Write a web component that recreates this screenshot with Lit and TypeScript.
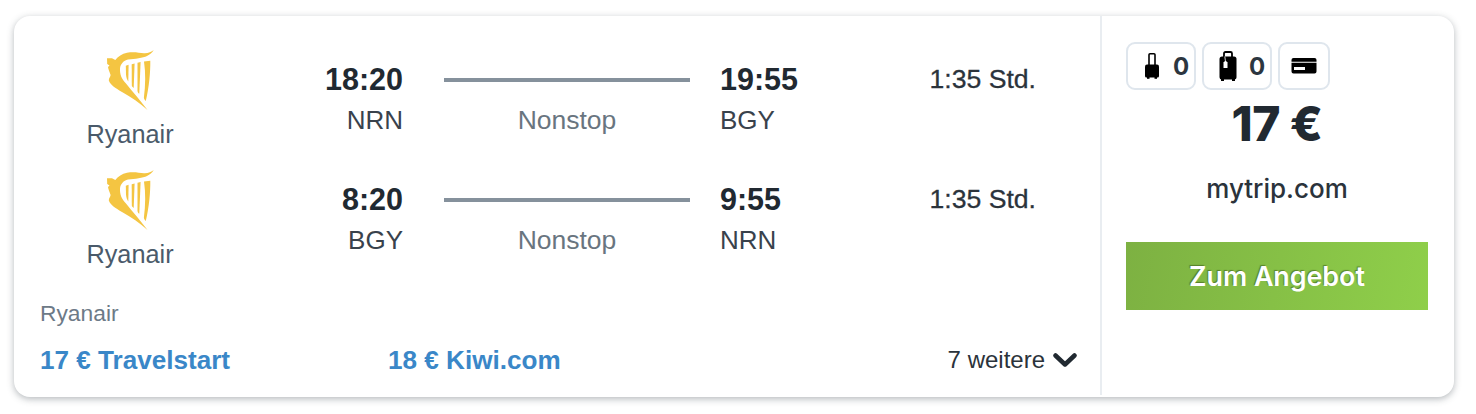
import { LitElement, html, css, svg } from "lit";
import { customElement } from "lit/decorators.js";

const harp = html`<svg class="harp" viewBox="0 0 47 60" width="47" height="60">
  <path fill="#f4c542" d="M46.700 0C45 3 43 4.500 40 6C36 8 28 9 21 9.500C16.500 10.500 13.600 14 13 18.500C12.700 24 14.500 29 19 33.500C25 41 33 50 40.500 60C33 53 24 47 15 42C9 38.500 3.500 35 1.800 30.500C1.800 28 3.500 26.500 3.600 25C2.600 22 1.300 19 1 17L2.500 15.500L.2 14L0 8.300L5 8.200L8.300 10C11 6.500 15 3.500 20 2.700C27 1.500 32 2.800 37 3.300C41 3.500 44.500 2 46.700 0Z"/>
  <path fill="#f4c542" d="M18.800 15.800L21.600 14.800L21.300 31.500C20 29.500 19.200 27.500 19 24.500Z"/>
  <path fill="#f4c542" d="M24.700 14.200L27.600 13.400L26.700 38C25.500 37 25 36.500 24.800 35.500Z"/>
  <path fill="#f4c542" d="M30.500 12.800L33.600 12L32.300 43.800C31 43 30.700 42.300 30.500 41Z"/>
  <path fill="#f4c542" d="M37 11.500L43.300 10.800C43.500 22 42 38 38.800 51C37.500 49.800 37 49 36.900 47.500C38.500 35 38.700 23 37 11.500Z"/>
</svg>`;

const cabin = svg`<svg class="ic" viewBox="0 0 16 28" width="16" height="28">
  <path fill="none" stroke="#000" stroke-width="1.600" d="M5 14V2.800Q5 1.800 6 1.800H10Q11 1.800 11 2.800V14"/>
  <path fill="#000" d="M3 12.500H13Q15 12.500 15 14.500V24Q15 25.500 13.500 25.500H2.500Q1 25.500 1 24V14.500Q1 12.500 3 12.500Z"/>
  <rect x="3" y="25" width="2.500" height="1.800" fill="#000"/><rect x="10.500" y="25" width="2.500" height="1.800" fill="#000"/>
</svg>`;

const hold = svg`<svg class="ic" viewBox="0 0 20 32" width="20" height="32">
  <path fill="none" stroke="#000" stroke-width="1.800" d="M6 7V3.500Q6 2 7.500 2H12.500Q14 2 14 3.500V7"/>
  <rect x="1.500" y="6.500" width="17" height="23" rx="2.500" fill="#000"/>
  <rect x="3" y="29" width="3" height="2" fill="#000"/><rect x="14" y="29" width="3" height="2" fill="#000"/>
  <path fill="#fff" d="M5.500 12.500L7 11H8L9.500 12.500V18H5.500Z"/>
  <path stroke="#fff" stroke-width=".8" d="M7.500 11.500L6.800 6.500"/>
</svg>`;

const card = svg`<svg class="ic" viewBox="0 0 26 18" width="26" height="18">
  <path fill="#000" d="M2.500 1H23.500Q25.500 1 25.500 3V4.700H.5V3Q.5 1 2.500 1Z"/>
  <path fill="#000" fill-rule="evenodd" d="M.5 5.700H25.500V14.500Q25.500 16.500 23.500 16.500H2.500Q.5 16.500 .5 14.500ZM3 10V13H14V10Z"/>
</svg>`;

const legs = [
  { dep: "18:20", from: "NRN", arr: "19:55", to: "BGY" },
  { dep: "8:20", from: "BGY", arr: "9:55", to: "NRN" },
];

@customElement("app-root")
export class AppRoot extends LitElement {
  static styles = css`
    :host { display: block; width: 1476px; height: 414px; background: #fff; overflow: hidden;
      font-family: "Liberation Sans", Arial, sans-serif; color: #212931; }
    .card { box-sizing: border-box; display: flex; margin: 16px 22px 0 14px; height: 381px; background: #fff;
      border-radius: 16px; box-shadow: 0 2px 7px rgba(60,70,80,.38); }
    .left { box-sizing: border-box; width: 1088px; padding: 24px 23px 0 26px; border-right: 2px solid #e9edf1; margin-bottom: 2px; }
    .row { display: grid; grid-template-columns: 180px 183px 317px 120px 196px; height: 120px; }
    .air { display: flex; flex-direction: column; align-items: center; padding-top: 10px; color: #4a5a6a; font-size: 25.300px; }
    .air span { line-height: 48px; }
    .harp { display: block; }
    .t { padding-top: 19px; }
    .t b { display: block; font-size: 30.500px; line-height: 40px; }
    .t span { display: block; padding-top: 1px; font-size: 26px; line-height: 41px; color: #39424c; }
    .dep { text-align: right; }
    .mid { padding: 19px 30px 0 41px; text-align: center; }
    .line { height: 4px; margin-top: 19px; background: #85919c; }
    .mid span { display: block; margin-top: 18px; font-size: 26.500px; line-height: 40px; color: #69757f; }
    .dur { padding-top: 19px; text-align: right; font-size: 26.600px; line-height: 40px; color: #2b333b; -webkit-text-stroke: .3px #2b333b; }
    .op { margin-top: 17px; padding-top: 1px; font-size: 22.800px; line-height: 31px; color: #6d7a87; }
    .links { display: flex; align-items: center; margin-top: 11px; height: 40px; font-size: 26.100px; font-weight: 700; color: #3a87c8; }
    .links a:first-child { width: 348px; }
    .more { display: flex; align-items: center; gap: 8px; margin-left: auto; font-weight: 400; font-size: 24px; color: #2b333b; }
    .right { flex: 1; box-sizing: border-box; padding: 26px 26px 0 24px; display: flex; flex-direction: column; }
    .badges { display: flex; gap: 6px; }
    .badge { box-sizing: border-box; display: flex; align-items: center; height: 48px; width: 70px; padding-left: 16px; gap: 13px;
      border: 2px solid #dfe6ed; border-radius: 9px; font-family: Inter, sans-serif; font-weight: 700; font-size: 24px; color: #2c363f; }
    .badge.big { padding-left: 14px; gap: 11px; }
    .badge.narrow { width: 52px; padding-left: 11px; }
    .ic { display: block; }
    .price { margin-top: 4px; text-align: center; font-family: Inter, sans-serif; font-weight: 800; font-size: 48px; line-height: 60px; letter-spacing: -.5px; color: #212931; }
    .site { margin-top: 15px; text-align: center; font-family: Inter, sans-serif; font-weight: 500; font-size: 26px; line-height: 40px; color: #2b333b; }
    .cta { display: flex; align-items: center; justify-content: center; margin-top: 33px; height: 68px; background: linear-gradient(100deg, #7db142, #8fcf4a);
      color: #fff; font-family: Inter, sans-serif; font-weight: 600; font-size: 26.800px; text-shadow: -1px -1px 1px rgba(50,80,20,.55); }
  `;

  render() {
    return html`<div class="card">
      <div class="left">
        ${legs.map(l => html`<div class="row">
          <div class="air">${harp}<span>Ryanair</span></div>
          <div class="t dep"><b>${l.dep}</b><span>${l.from}</span></div>
          <div class="mid"><div class="line"></div><span>Nonstop</span></div>
          <div class="t"><b>${l.arr}</b><span>${l.to}</span></div>
          <div class="dur">1:35 Std.</div>
        </div>`)}
        <div class="op">Ryanair</div>
        <div class="links">
          <a>17 € Travelstart</a>
          <a>18 € Kiwi.com</a>
          <div class="more">7 weitere
            <svg viewBox="0 0 24 14" width="24" height="14"><path fill="none" stroke="#212931" stroke-width="4.500" stroke-linecap="round" stroke-linejoin="round" d="M2.500 2.500L12 11.500L21.500 2.500"/></svg>
          </div>
        </div>
      </div>
      <div class="right">
        <div class="badges">
          <div class="badge">${cabin}<span>0</span></div>
          <div class="badge big">${hold}<span>0</span></div>
          <div class="badge narrow">${card}</div>
        </div>
        <div class="price">17 €</div>
        <div class="site">mytrip.com</div>
        <div class="cta">Zum Angebot</div>
      </div>
    </div>`;
  }
}
